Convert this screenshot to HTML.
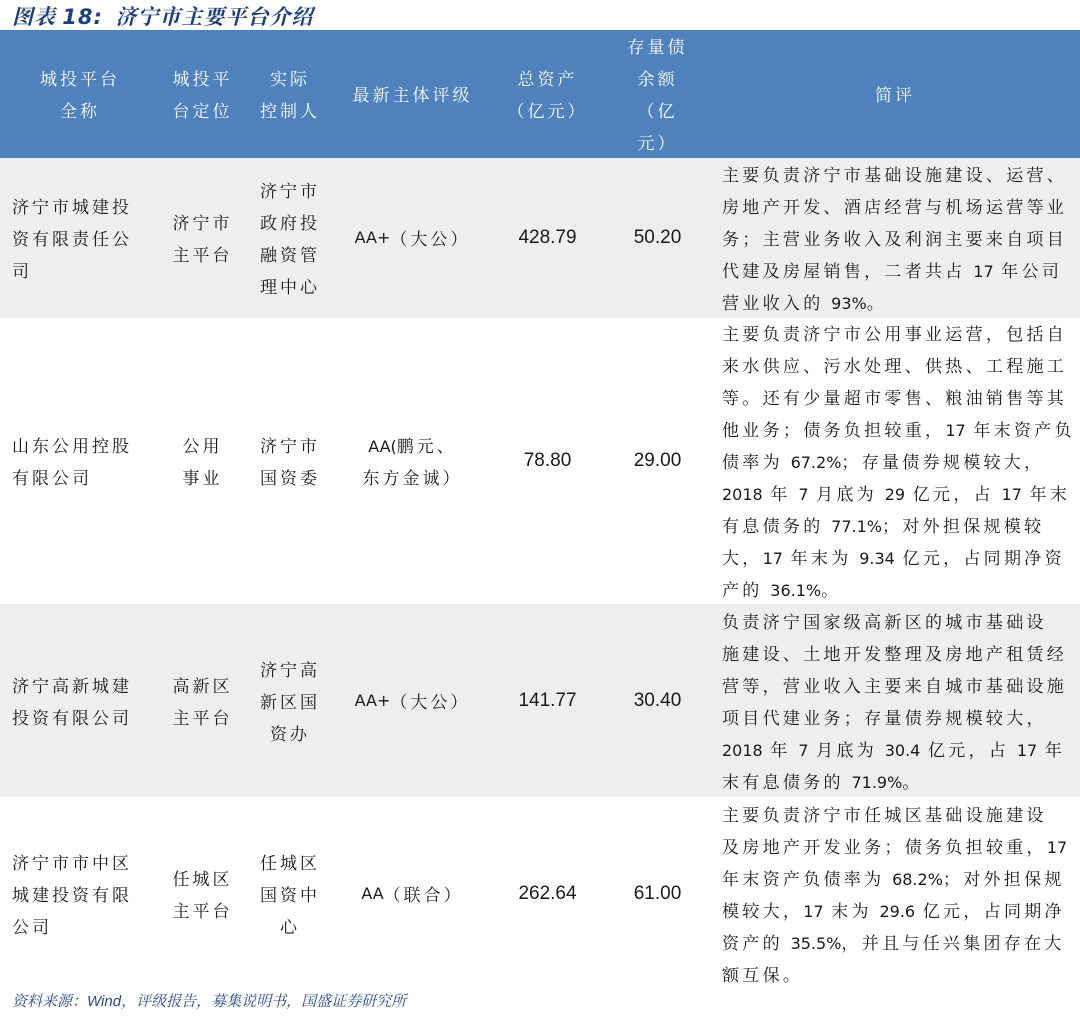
<!DOCTYPE html>
<html><head><meta charset="utf-8"><style>
*{margin:0;padding:0;box-sizing:border-box}
body{width:1080px;height:1018px;background:#fff;position:relative;overflow:hidden;font-family:"Noto Serif CJK SC","Liberation Serif",serif;color:#1a1a1a}
.t{position:absolute;left:12px;top:1px;font-size:21px;font-weight:bold;font-style:italic;color:#1f3f7a;letter-spacing:1px}
.t b{font-family:"DejaVu Sans",sans-serif}
.f{position:absolute;left:12px;top:990px;font-size:15px;font-style:italic;color:#2a4a8a}
.f b{font-family:"Liberation Sans",sans-serif;font-weight:normal}
.band{position:absolute;left:0;width:1080px}
.c{position:absolute;display:flex;align-items:center;justify-content:center;text-align:center;font-size:17px;line-height:32px;letter-spacing:3px}
.h{color:#fff}
.l{justify-content:flex-start;text-align:left}
.d{justify-content:flex-start;text-align:left;letter-spacing:3.3px;font-size:17px;white-space:nowrap}
.n{font-size:19px;letter-spacing:0;font-family:"Liberation Sans",sans-serif}
.e{font-family:"DejaVu Sans",sans-serif;letter-spacing:0;font-size:16px;line-height:1}
</style></head><body>
<div class="t">图表 <b>18:</b>&nbsp;&nbsp;济宁市主要平台介绍</div>
<div class="band" style="top:30px;height:128px;background:#4f81bd"></div>
<div class="band" style="top:158px;height:160px;background:#eeeef1"></div>
<div class="band" style="top:604px;height:193px;background:#eeeef1"></div>

<div class="c h" style="left:0;top:30px;width:160px;height:128px">城投平台<br>全称</div>
<div class="c h" style="left:160px;top:30px;width:85px;height:128px">城投平<br>台定位</div>
<div class="c h" style="left:245px;top:30px;width:90px;height:128px">实际<br>控制人</div>
<div class="c h" style="left:335px;top:30px;width:155px;height:128px">最新主体评级</div>
<div class="c h" style="left:490px;top:30px;width:115px;height:128px">总资产<br>（亿元）</div>
<div class="c h" style="left:605px;top:30px;width:105px;height:128px">存量债<br>余额<br>（亿<br>元）</div>
<div class="c h" style="left:710px;top:30px;width:370px;height:128px">简评</div>

<div class="c l" style="left:12px;top:158px;width:148px;height:160px">济宁市城建投<br>资有限责任公<br>司</div>
<div class="c" style="left:160px;top:158px;width:85px;height:160px">济宁市<br>主平台</div>
<div class="c" style="left:245px;top:158px;width:90px;height:160px">济宁市<br>政府投<br>融资管<br>理中心</div>
<div class="c" style="left:335px;top:158px;width:155px;height:160px"><span class="e">AA+</span>（大公）</div>
<div class="c n" style="left:490px;top:158px;width:115px;height:160px">428.79</div>
<div class="c n" style="left:605px;top:158px;width:105px;height:160px">50.20</div>
<div class="c d" style="left:722px;top:158px;width:358px;height:160px"><div>主要负责济宁市基础设施建设、运营、<br>房地产开发、酒店经营与机场运营等业<br>务；主营业务收入及利润主要来自项目<br>代建及房屋销售，二者共占 <span class="e">17</span> 年公司<br>营业收入的 <span class="e">93%</span>。</div></div>

<div class="c l" style="left:12px;top:318px;width:148px;height:286px">山东公用控股<br>有限公司</div>
<div class="c" style="left:160px;top:318px;width:85px;height:286px">公用<br>事业</div>
<div class="c" style="left:245px;top:318px;width:90px;height:286px">济宁市<br>国资委</div>
<div class="c" style="left:335px;top:318px;width:155px;height:286px"><div><span class="e">AA(</span>鹏元、<br>东方金诚）</div></div>
<div class="c n" style="left:490px;top:318px;width:115px;height:286px">78.80</div>
<div class="c n" style="left:605px;top:318px;width:105px;height:286px">29.00</div>
<div class="c d" style="left:722px;top:318px;width:358px;height:286px"><div>主要负责济宁市公用事业运营，包括自<br>来水供应、污水处理、供热、工程施工<br>等。还有少量超市零售、粮油销售等其<br>他业务；债务负担较重，<span class="e">17</span> 年末资产负<br>债率为 <span class="e">67.2%</span>；存量债券规模较大，<br><span class="e">2018</span> 年 <span class="e">7</span> 月底为 <span class="e">29</span> 亿元，占 <span class="e">17</span> 年末<br>有息债务的 <span class="e">77.1%</span>；对外担保规模较<br>大，<span class="e">17</span> 年末为 <span class="e">9.34</span> 亿元，占同期净资<br>产的 <span class="e">36.1%</span>。</div></div>

<div class="c l" style="left:12px;top:604px;width:148px;height:193px">济宁高新城建<br>投资有限公司</div>
<div class="c" style="left:160px;top:604px;width:85px;height:193px">高新区<br>主平台</div>
<div class="c" style="left:245px;top:604px;width:90px;height:193px">济宁高<br>新区国<br>资办</div>
<div class="c" style="left:335px;top:604px;width:155px;height:193px"><span class="e">AA+</span>（大公）</div>
<div class="c n" style="left:490px;top:604px;width:115px;height:193px">141.77</div>
<div class="c n" style="left:605px;top:604px;width:105px;height:193px">30.40</div>
<div class="c d" style="left:722px;top:604px;width:358px;height:193px"><div>负责济宁国家级高新区的城市基础设<br>施建设、土地开发整理及房地产租赁经<br>营等，营业收入主要来自城市基础设施<br>项目代建业务；存量债券规模较大，<br><span class="e">2018</span> 年 <span class="e">7</span> 月底为 <span class="e">30.4</span> 亿元，占 <span class="e">17</span> 年<br>末有息债务的 <span class="e">71.9%</span>。</div></div>

<div class="c l" style="left:12px;top:797px;width:148px;height:193px">济宁市市中区<br>城建投资有限<br>公司</div>
<div class="c" style="left:160px;top:797px;width:85px;height:193px">任城区<br>主平台</div>
<div class="c" style="left:245px;top:797px;width:90px;height:193px">任城区<br>国资中<br>心</div>
<div class="c" style="left:335px;top:797px;width:155px;height:193px"><span class="e">AA</span>（联合）</div>
<div class="c n" style="left:490px;top:797px;width:115px;height:193px">262.64</div>
<div class="c n" style="left:605px;top:797px;width:105px;height:193px">61.00</div>
<div class="c d" style="left:722px;top:797px;width:358px;height:193px"><div>主要负责济宁市任城区基础设施建设<br>及房地产开发业务；债务负担较重，<span class="e">17</span><br>年末资产负债率为 <span class="e">68.2%</span>；对外担保规<br>模较大，<span class="e">17</span> 末为 <span class="e">29.6</span> 亿元，占同期净<br>资产的 <span class="e">35.5%</span>，并且与任兴集团存在大<br>额互保。</div></div>

<div class="f">资料来源：<b>Wind</b>，评级报告，募集说明书，国盛证券研究所</div>
</body></html>
